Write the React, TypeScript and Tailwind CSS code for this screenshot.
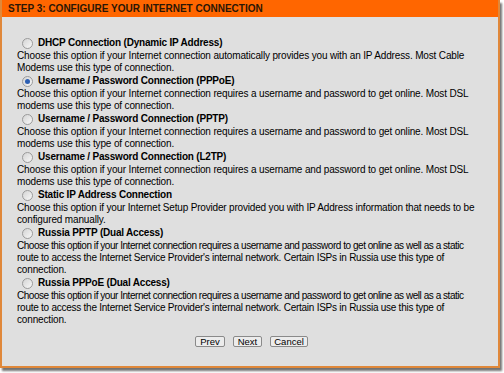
import React from 'react';

type Line = { text: string; track?: string };
type Option = { title: string; lines: Line[]; checked?: boolean };

const DSL = 'Choose this option if your Internet connection requires a username and password to get online. Most DSL';
const STATIC_ROUTE = 'Choose this option if your Internet connection requires a username and password to get online as well as a static';
const ROUTE = "route to access the Internet Service Provider's internal network. Certain ISPs in Russia use this type of";

const OPTIONS: Option[] = [
  {
    title: 'DHCP Connection (Dynamic IP Address)',
    lines: [
      { text: 'Choose this option if your Internet connection automatically provides you with an IP Address. Most Cable' },
      { text: 'Modems use this type of connection.' },
    ],
  },
  {
    title: 'Username / Password Connection (PPPoE)',
    checked: true,
    lines: [{ text: DSL }, { text: 'modems use this type of connection.' }],
  },
  {
    title: 'Username / Password Connection (PPTP)',
    lines: [{ text: DSL }, { text: 'modems use this type of connection.' }],
  },
  {
    title: 'Username / Password Connection (L2TP)',
    lines: [{ text: DSL }, { text: 'modems use this type of connection.' }],
  },
  {
    title: 'Static IP Address Connection',
    lines: [
      { text: 'Choose this option if your Internet Setup Provider provided you with IP Address information that needs to be', track: 'tracking-[-0.18px]' },
      { text: 'configured manually.' },
    ],
  },
  {
    title: 'Russia PPTP (Dual Access)',
    lines: [
      { text: STATIC_ROUTE, track: 'tracking-[-0.46px]' },
      { text: ROUTE, track: 'tracking-[-0.25px]' },
      { text: 'connection.' },
    ],
  },
  {
    title: 'Russia PPPoE (Dual Access)',
    lines: [
      { text: STATIC_ROUTE, track: 'tracking-[-0.46px]' },
      { text: ROUTE, track: 'tracking-[-0.25px]' },
      { text: 'connection.' },
    ],
  },
];

const Radio: React.FC<{ checked?: boolean }> = ({ checked }) => (
  <span className="w-[11px] h-[11px] rounded-full border border-[#9a9a9a] bg-gradient-to-br from-[#d4d4d4] to-[#f8f8f8] flex items-center justify-center shrink-0">
    {checked && <span className="w-[5px] h-[5px] rounded-full bg-[#2c5fb3]" />}
  </span>
);

const Btn: React.FC<{ label: string; px: string }> = ({ label, px }) => (
  <button className={`h-[11px] ${px} border border-[#8a8a8a] rounded-[2px] bg-[#ececec] text-[9.5px] leading-[9px] text-black`}>
    {label}
  </button>
);

export default function App() {
  return (
    <div className="w-[504px] h-[373px] bg-white overflow-hidden" style={{ fontFamily: '"Liberation Sans", Arial, sans-serif' }}>
      <div className="w-[500px] h-[368px] flex flex-col border-x-2 border-b-2 border-[#e0883a] shadow-[2px_3px_2px_rgba(0,0,0,0.55)] bg-[#dfdfdf]">
        {/* Header */}
        <div className="h-[17px] bg-[#ff6600] flex items-center px-[6px]">
          <span className="text-[10px] font-bold text-[#2a1606]">STEP 3: CONFIGURE YOUR INTERNET CONNECTION</span>
        </div>

        {/* Options */}
        <div className="flex-1 flex flex-col pt-[19px] pl-[15px] text-[10px] text-black">
          {OPTIONS.map((o) => (
            <div key={o.title} className="flex flex-col">
              <div className="h-[14px] flex items-center gap-[5px] pl-[5px]">
                <Radio checked={o.checked} />
                <span className="font-bold leading-[14px] tracking-[-0.2px]">{o.title}</span>
              </div>
              {o.lines.map((l, i) => (
                <div key={i} className={`leading-[12px] whitespace-nowrap ${l.track ?? 'tracking-[-0.15px]'}`}>{l.text}</div>
              ))}
            </div>
          ))}

          <div className="flex justify-center gap-[8px] mt-[10px] pr-[12px]">
            <Btn label="Prev" px="px-[4px]" />
            <Btn label="Next" px="px-[4px]" />
            <Btn label="Cancel" px="px-[3px]" />
          </div>
        </div>
      </div>
    </div>
  );
}
